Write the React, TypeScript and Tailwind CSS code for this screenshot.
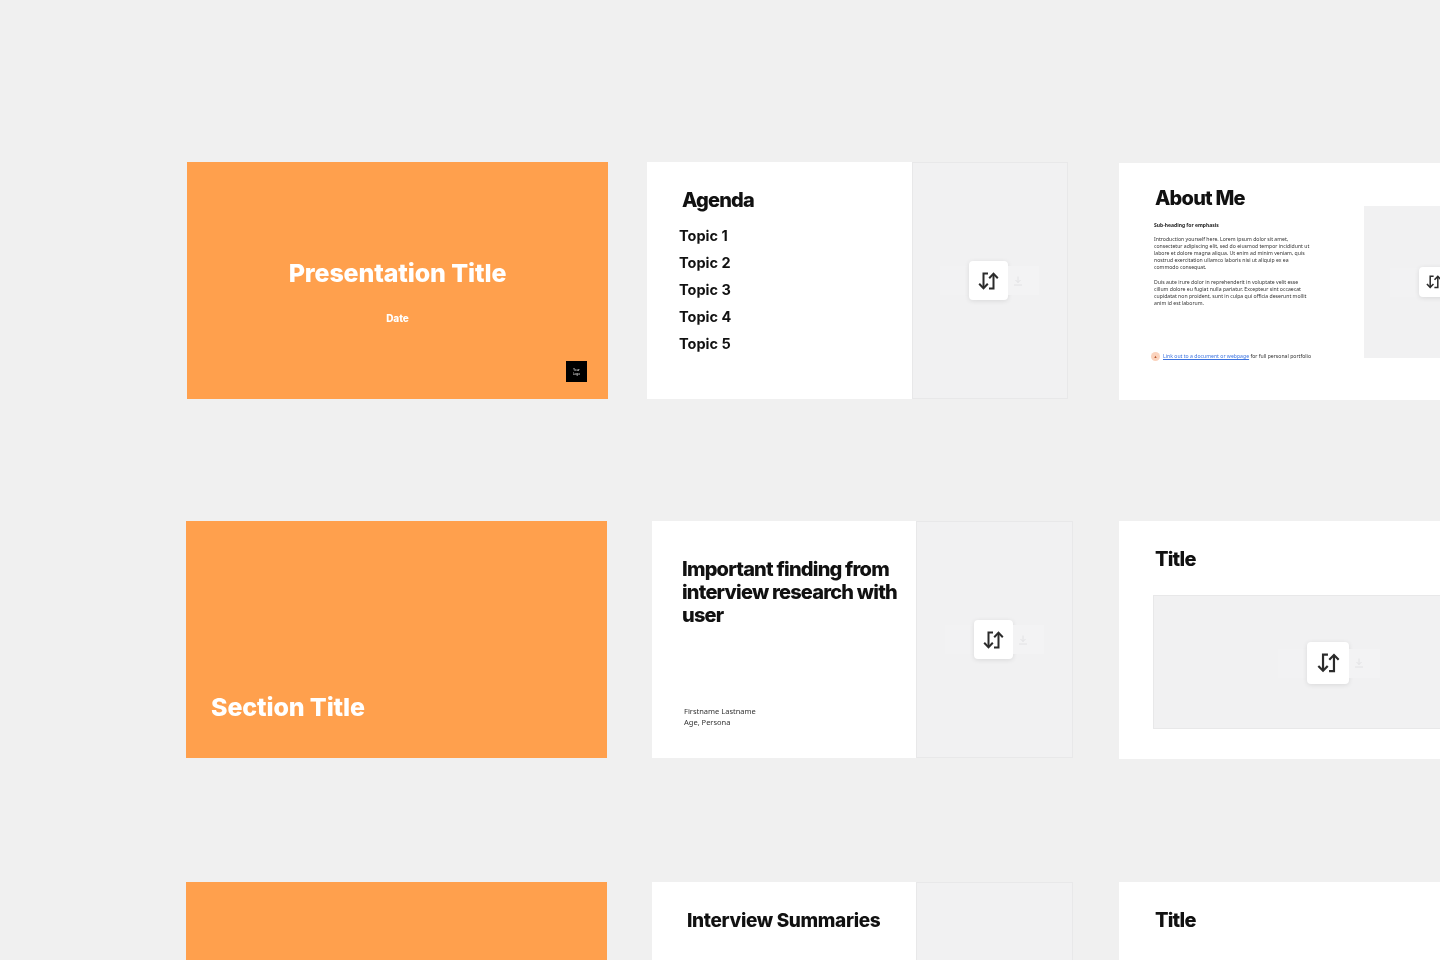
import React from "react";

const headingFont = "font-['Inter',sans-serif] font-extrabold";
const coverFont = "font-['Inter',sans-serif] font-extrabold tracking-[-0.005em]";

const SwapIcon = ({ width }: { width: number }) => (
  <svg width={width} height={(width * 18) / 21} viewBox="0 0 21 18" fill="none" stroke="#2b2b2b" strokeWidth="2">
    <path d="M10 1.5H5.5V16" />
    <path d="M1.2 11.8L5.5 16.2L9.8 11.8" />
    <path d="M11 16.5H15.5V2" />
    <path d="M11.2 6.2L15.5 1.8L19.8 6.2" />
  </svg>
);

// faint upload / download tiles sit beside the white swap tile
const SwapTile = ({ tile = 39, icon = 21 }: { tile?: number; icon?: number }) => (
  <div className="flex items-center shrink-0">
    <div className="w-[29px] h-[29px] bg-[#f2f2f3]" />
    <div
      className="flex items-center justify-center bg-white rounded-[4px] shadow-[0_1px_5px_rgba(0,0,0,0.1)] shrink-0"
      style={{ width: tile, height: tile }}
    >
      <SwapIcon width={icon} />
    </div>
    <div className="w-[31px] h-[29px] bg-[#f3f3f4] flex items-center justify-start pl-[4px]">
      <svg width="12" height="12" viewBox="0 0 24 24" fill="none" stroke="#e2e2e4" strokeWidth="2">
        <path d="M12 3V15M7 10L12 15L17 10M4 20H20" />
      </svg>
    </div>
  </div>
);

const Placeholder = ({ className = "", children }: { className?: string; children?: React.ReactNode }) => (
  <div
    className={`bg-[#f1f1f2] border border-[#e8e8e9] flex items-center justify-center overflow-hidden shrink-0 ${className}`}
  >
    {children}
  </div>
);

const Para = ({ children }: { children: React.ReactNode }) => (
  <p className="font-['Noto_Sans',sans-serif] text-[5.15px] leading-[7px] text-[#333] whitespace-nowrap">{children}</p>
);

export default function App() {
  return (
    <div className="relative w-[1440px] h-[960px] overflow-hidden bg-[#f0f0f0] pt-[162px] blur-[0.5px]">
      {/* row 1 */}
      <div className="flex items-start pl-[187px] h-[359px]">
        <div className="w-[421px] h-[237px] shrink-0 bg-[#ffa04d] text-white flex flex-col items-center pt-[94px] px-[21px]">
          <h1 className={`${coverFont} text-[25px] leading-[34px]`}>Presentation Title</h1>
          <div className={`${coverFont} text-[10px] leading-[12px] mt-[22px]`}>Date</div>
          <div className="self-end mt-[37px] w-[21px] h-[21px] bg-black flex items-center justify-center text-center text-[3px] leading-[4px] font-['Noto_Sans',sans-serif]">
            Your
            <br />
            Logo
          </div>
        </div>

        <div className="ml-[39px] w-[421px] h-[237px] shrink-0 flex bg-white">
          <div className="w-[265px] shrink-0 pl-[33px] pt-[26px]">
            <h2 className={`${headingFont} tracking-[-0.04em] text-[20px] leading-[24px] text-[#111] ml-[2px]`}>Agenda</h2>
            <ul className="font-['Inter',sans-serif] font-bold text-[14.5px] leading-[27px] text-[#111] mt-[10px] -ml-[1px]">
              <li>Topic 1</li>
              <li>Topic 2</li>
              <li>Topic 3</li>
              <li>Topic 4</li>
              <li>Topic 5</li>
            </ul>
          </div>
          <Placeholder className="w-[156px] pr-[2px]">
            <SwapTile />
          </Placeholder>
        </div>

        <div className="ml-[51px] mt-[1px] w-[400px] h-[237px] bg-white flex shrink-0">
          <div className="w-[245px] pl-[35px] pt-[23px] shrink-0">
            <h2 className={`${headingFont} tracking-[-0.04em] text-[20px] leading-[24px] text-[#111] ml-[1px]`}>
              About Me
            </h2>
            <div className="font-['Noto_Sans',sans-serif] font-bold text-[5px] leading-[7px] text-[#222] mt-[12px]">
              Sub-heading for emphasis
            </div>
            <div className="mt-[7px] flex flex-col gap-[8px]">
              <Para>
                Introduction yourself here. Lorem ipsum dolor sit amet,
                <br />
                consectetur adipiscing elit, sed do eiusmod tempor incididunt ut
                <br />
                labore et dolore magna aliqua. Ut enim ad minim veniam, quis
                <br />
                nostrud exercitation ullamco laboris nisi ut aliquip ex ea
                <br />
                commodo consequat.
              </Para>
              <Para>
                Duis aute irure dolor in reprehenderit in voluptate velit esse
                <br />
                cillum dolore eu fugiat nulla pariatur. Excepteur sint occaecat
                <br />
                cupidatat non proident, sunt in culpa qui officia deserunt mollit
                <br />
                anim id est laborum.
              </Para>
            </div>
            <div className="flex items-center gap-[3px] mt-[45px] -ml-[3px] font-['Noto_Sans',sans-serif] text-[5.15px] leading-[7px] text-[#333] whitespace-nowrap">
              <span className="w-[9px] h-[9px] rounded-full bg-[#fbd3bd] flex items-center justify-center text-[4px] text-[#b5542a]">
                ▲
              </span>
              <span>
                <span className="text-[#3b73e0] underline">Link out to a document or webpage</span> for full personal
                portfolio
              </span>
            </div>
          </div>
          <Placeholder className="w-[152px] h-[152px] mt-[43px] border-none !justify-start pl-[26px]">
            <SwapTile tile={30} icon={16} />
          </Placeholder>
        </div>
      </div>

      {/* row 2 */}
      <div className="flex items-start pl-[186px] h-[361px]">
        <div className="w-[421px] h-[237px] shrink-0 bg-[#ffa04d] text-white flex items-end pl-[25px] pb-[34px]">
          <h1 className={`${coverFont} text-[25px] leading-[34px]`}>Section Title</h1>
        </div>

        <div className="ml-[45px] w-[421px] h-[237px] shrink-0 flex bg-white">
          <div className="w-[264px] shrink-0 pl-[30px] pt-[37px] flex flex-col">
            <h2 className={`${headingFont} tracking-[-0.04em] text-[20px] leading-[23px] text-[#111] w-[225px]`}>
              Important finding from interview research with user
            </h2>
            <div className="font-['Noto_Sans',sans-serif] text-[7.5px] leading-[11px] text-[#333] mt-[79px] ml-[2px]">
              Firstname Lastname
              <br />
              Age, Persona
            </div>
          </div>
          <Placeholder className="w-[157px]">
            <SwapTile />
          </Placeholder>
        </div>

        <div className="ml-[46px] w-[400px] h-[238px] bg-white shrink-0 pt-[26px] pl-[36px]">
          <h2 className={`${headingFont} tracking-[-0.04em] text-[20px] leading-[24px] text-[#111]`}>Title</h2>
          <Placeholder className="w-[364px] h-[134px] mt-[24px] -ml-[2px] !justify-start pl-[124px] pt-[2px]">
            <SwapTile tile={42} icon={23} />
          </Placeholder>
        </div>
      </div>

      {/* row 3 */}
      <div className="flex items-start pl-[186px]">
        <div className="w-[421px] h-[237px] shrink-0 bg-[#ffa04d]" />

        <div className="ml-[45px] w-[421px] h-[237px] shrink-0 flex bg-white">
          <div className="w-[264px] shrink-0 pl-[35px] pt-[27px]">
            <h2 className={`${headingFont} tracking-[-0.018em] text-[19px] leading-[24px] text-[#111] whitespace-nowrap`}>
              Interview Summaries
            </h2>
          </div>
          <Placeholder className="w-[157px]" />
        </div>

        <div className="ml-[46px] w-[400px] h-[237px] bg-white shrink-0 pt-[26px] pl-[36px]">
          <h2 className={`${headingFont} tracking-[-0.04em] text-[20px] leading-[24px] text-[#111]`}>Title</h2>
        </div>
      </div>
    </div>
  );
}
